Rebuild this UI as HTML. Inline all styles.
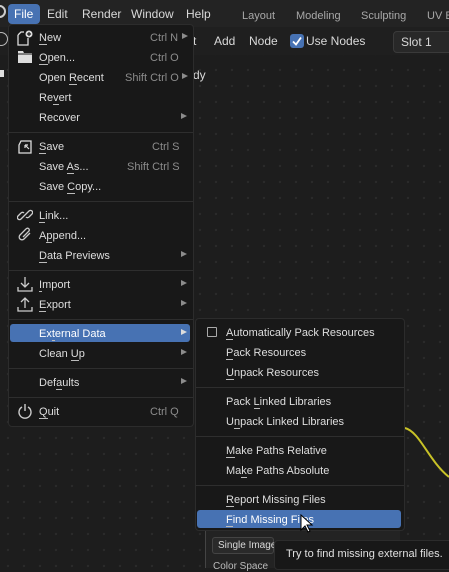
<!DOCTYPE html>
<html><head><meta charset="utf-8"><style>
*{margin:0;padding:0;box-sizing:border-box}
body{width:449px;height:568px;overflow:hidden;background:#1d1d1d;font-family:"Liberation Sans","DejaVu Sans",sans-serif;font-size:11px;color:#d9d9d9;position:relative}
.grid{position:absolute;left:0;top:55px;width:449px;height:513px;background-image:radial-gradient(circle,#2b2b2b 1px,transparent 1.3px);background-size:16px 16px;background-position:0px -9px}
.a{position:absolute;white-space:nowrap}
.top{position:absolute;left:0;top:0;width:449px;height:27px;background:#232323}
.hdr{position:absolute;left:0;top:27px;width:449px;height:28px;background:#1f1f1f}
.menu{position:absolute;background:#181818;border:1px solid #2c2c2c;border-radius:4px}
.it{position:absolute;height:20px;line-height:22px;white-space:nowrap;color:#dedede}
.sc{position:absolute;color:#8c8c8c;white-space:nowrap;height:20px;line-height:22px}
.ar{position:absolute;width:0;height:0;border-left:6px solid #8c8c8c;border-top:3.5px solid transparent;border-bottom:3.5px solid transparent}
.sep{position:absolute;height:1px;background:#2e2e2e}
.hl{position:absolute;background:#4772b3;border-radius:3px}
u{text-decoration:none;border-bottom:1px solid #bbb}
svg{position:absolute}
</style></head><body>
<div class="grid"></div>
<div class="top"></div>
<div class="hdr"></div>
<div class="a" style="left:-7px;top:5px;width:13px;height:13px;border:2px solid #ccc;border-radius:50%"></div>
<div class="a" style="left:8px;top:4px;width:32px;height:20px;background:#4772b3;border-radius:4px"></div>
<div class="a" style="left:14px;top:7px;font-size:12px;color:#fff">File</div>
<div class="a" style="left:47px;top:7px;font-size:12px">Edit</div>
<div class="a" style="left:82px;top:7px;font-size:12px">Render</div>
<div class="a" style="left:131px;top:7px;font-size:12px">Window</div>
<div class="a" style="left:186px;top:7px;font-size:12px">Help</div>
<div class="a" style="left:242px;top:10px;color:#a8a8a8">Layout</div>
<div class="a" style="left:296px;top:10px;color:#a8a8a8">Modeling</div>
<div class="a" style="left:361px;top:10px;color:#a8a8a8">Sculpting</div>
<div class="a" style="left:427px;top:10px;color:#a8a8a8">UV E</div>
<div class="a" style="left:-6px;top:32px;width:14px;height:14px;border:1.5px solid #bbb;border-radius:50%"></div>
<div class="a" style="left:0;top:70px;width:4px;height:7px;background:#ddd"></div>
<div class="a" style="left:193px;top:34px;font-size:12px">t</div>
<div class="a" style="left:214px;top:34px;font-size:12px">Add</div>
<div class="a" style="left:249px;top:34px;font-size:12px">Node</div>
<div class="a" style="left:290px;top:34px;width:14px;height:14px;background:#4772b3;border-radius:3px"></div>
<svg style="left:290px;top:34px" width="14" height="14"><path d="M3 7.5l3 3 5-7" stroke="#fff" stroke-width="1.8" fill="none"/></svg>
<div class="a" style="left:306px;top:34px;font-size:12px">Use Nodes</div>
<div class="a" style="left:393px;top:31px;width:60px;height:22px;background:#282828;border:1px solid #3a3a3a;border-radius:4px"></div>
<div class="a" style="left:401px;top:35px;font-size:12px">Slot 1</div>
<div class="a" style="left:193px;top:68px;font-size:12px">dy</div>
<svg style="left:400px;top:420px" width="49" height="70"><path d="M5 8 C20 12,28 40,49 57" stroke="#c8c227" stroke-width="2" fill="none"/></svg>
<div class="a" style="left:205px;top:529px;width:195px;height:39px;background:#232323;border-left:1px solid #444"></div>
<div class="a" style="left:212px;top:537px;width:62px;height:17px;border:1px solid #444;border-radius:3px;background:#2a2a2a;font-size:10px;padding:2px 0 0 5px">Single Image</div>
<div class="a" style="left:213px;top:561px;font-size:10px;color:#bbb">Color Space</div>
<div class="a" style="left:274px;top:540px;width:180px;height:30px;background:#181818;border:1px solid #2c2c2c;border-radius:4px"></div>
<div class="a" style="left:286px;top:548px;font-size:11px;color:#e0e0e0">Try to find missing external files.</div>

<div class="menu" style="left:8px;top:24px;width:186px;height:403px"></div>
<div class="hl" style="left:10px;top:324px;width:180px;height:18px"></div>
<svg style="left:17px;top:30px" width="16" height="16"><path d="M1 5v10h10v-7" stroke="#ddd" stroke-width="1.3" fill="none"/><path d="M1 5l3-3h3" stroke="#ddd" stroke-width="1.3" fill="none"/><circle cx="12" cy="4" r="3.5" fill="#ddd"/><path d="M12 2v4M10 4h4" stroke="#181818" stroke-width="1.2"/></svg>
<svg style="left:17px;top:50px" width="16" height="14"><path d="M1 1h5l1 2h8v10H1z" fill="#ddd"/><path d="M1 4h14" stroke="#181818"/></svg>
<svg style="left:17px;top:139px" width="16" height="16"><path d="M4 2h10v12H2V6z" stroke="#ddd" stroke-width="1.3" fill="none"/><path d="M8 6l4 4M8 6v3M8 6h3" stroke="#ddd" stroke-width="1.2" fill="none"/></svg>
<svg style="left:17px;top:207px" width="16" height="16"><path d="M7 9l-3 3a2 2 0 01-3-3l3-3a2 2 0 013 0M9 7l3-3a2 2 0 013 3l-3 3a2 2 0 01-3 0M6 10l4-4" stroke="#ccc" stroke-width="1.3" fill="none"/></svg>
<svg style="left:17px;top:227px" width="16" height="16"><path d="M13 6l-6 6a2.5 2.5 0 01-4-4l6-6a1.7 1.7 0 013 2l-6 6" stroke="#ccc" stroke-width="1.3" fill="none"/></svg>
<svg style="left:17px;top:276px" width="16" height="16"><path d="M8 1v10M4 7l4 4 4-4M1 11v4h14v-4" stroke="#ccc" stroke-width="1.3" fill="none"/></svg>
<svg style="left:17px;top:296px" width="16" height="16"><path d="M8 12V2M4 6l4-4 4 4M1 11v4h14v-4" stroke="#ccc" stroke-width="1.3" fill="none"/></svg>
<svg style="left:17px;top:403px" width="16" height="16"><path d="M5 4a6 6 0 106 0M8 1v7" stroke="#ccc" stroke-width="1.4" fill="none"/></svg>

<div class="it" style="left:39px;top:27px"><u>N</u>ew</div><div class="sc" style="left:150px;top:27px">Ctrl N</div><div class="ar" style="left:182px;top:33px"></div>
<div class="it" style="left:39px;top:47px"><u>O</u>pen...</div><div class="sc" style="left:150px;top:47px">Ctrl O</div>
<div class="it" style="left:39px;top:67px">Open <u>R</u>ecent</div><div class="sc" style="left:125px;top:67px">Shift Ctrl O</div><div class="ar" style="left:182px;top:73px"></div>
<div class="it" style="left:39px;top:87px">Re<u>v</u>ert</div>
<div class="it" style="left:39px;top:107px">Recover</div><div class="ar" style="left:181px;top:113px"></div>
<div class="sep" style="left:9px;top:132px;width:184px"></div>
<div class="it" style="left:39px;top:136px"><u>S</u>ave</div><div class="sc" style="left:152px;top:136px">Ctrl S</div>
<div class="it" style="left:39px;top:156px">Save <u>A</u>s...</div><div class="sc" style="left:127px;top:156px">Shift Ctrl S</div>
<div class="it" style="left:39px;top:176px">Save <u>C</u>opy...</div>
<div class="sep" style="left:9px;top:201px;width:184px"></div>
<div class="it" style="left:39px;top:205px"><u>L</u>ink...</div>
<div class="it" style="left:39px;top:225px">A<u>p</u>pend...</div>
<div class="it" style="left:39px;top:245px"><u>D</u>ata Previews</div><div class="ar" style="left:181px;top:251px"></div>
<div class="sep" style="left:9px;top:270px;width:184px"></div>
<div class="it" style="left:39px;top:274px"><u>I</u>mport</div><div class="ar" style="left:181px;top:280px"></div>
<div class="it" style="left:39px;top:294px"><u>E</u>xport</div><div class="ar" style="left:181px;top:300px"></div>
<div class="sep" style="left:9px;top:319px;width:184px"></div>
<div class="it" style="left:39px;top:323px;color:#fff">Ex<u>t</u>ernal Data</div><div class="ar" style="left:181px;top:329px;border-left-color:#ddd"></div>
<div class="it" style="left:39px;top:343px">Clean <u>U</u>p</div><div class="ar" style="left:181px;top:349px"></div>
<div class="sep" style="left:9px;top:368px;width:184px"></div>
<div class="it" style="left:39px;top:372px">Def<u>a</u>ults</div><div class="ar" style="left:181px;top:378px"></div>
<div class="sep" style="left:9px;top:397px;width:184px"></div>
<div class="it" style="left:39px;top:401px"><u>Q</u>uit</div><div class="sc" style="left:150px;top:401px">Ctrl Q</div>

<div class="menu" style="left:195px;top:318px;width:210px;height:213px"></div>
<div class="hl" style="left:197px;top:510px;width:204px;height:18px"></div>
<div class="a" style="left:207px;top:327px;width:10px;height:10px;border:1px solid #aaa;border-radius:1px"></div>
<div class="it" style="left:226px;top:322px"><u>A</u>utomatically Pack Resources</div>
<div class="it" style="left:226px;top:342px"><u>P</u>ack Resources</div>
<div class="it" style="left:226px;top:362px"><u>U</u>npack Resources</div>
<div class="sep" style="left:196px;top:387px;width:208px"></div>
<div class="it" style="left:226px;top:391px">Pack <u>L</u>inked Libraries</div>
<div class="it" style="left:226px;top:411px">U<u>n</u>pack Linked Libraries</div>
<div class="sep" style="left:196px;top:436px;width:208px"></div>
<div class="it" style="left:226px;top:440px"><u>M</u>ake Paths Relative</div>
<div class="it" style="left:226px;top:460px">Ma<u>k</u>e Paths Absolute</div>
<div class="sep" style="left:196px;top:485px;width:208px"></div>
<div class="it" style="left:226px;top:489px"><u>R</u>eport Missing Files</div>
<div class="it" style="left:226px;top:509px;color:#fff"><u>F</u>ind Missing Files</div>
<svg style="left:300px;top:514px" width="14" height="20"><path d="M1 1v15l4-4 3 6 2-1-3-6h5z" fill="#fff" stroke="#000" stroke-width="1"/></svg>
</body></html>
